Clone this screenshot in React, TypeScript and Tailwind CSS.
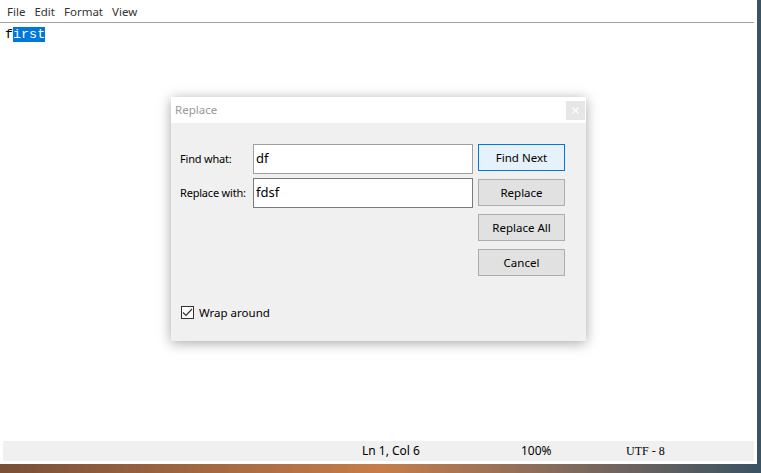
import React from 'react';

const ui = { fontFamily: '"Noto Sans", "Open Sans", sans-serif' };

function DialogButton({ label, primary }: { label: string; primary?: boolean }) {
    return (
        <div
            className={`h-[27px] w-[87px] flex items-center justify-center text-[11.5px] text-black border ${primary ? 'bg-[#e5f1fb] border-[#0078d7]' : 'bg-[#e1e1e1] border-[#adadad]'}`}
        >
            {label}
        </div>
    );
}

export default function App() {
    return (
        <div
            className="relative w-[761px] h-[473px] overflow-hidden bg-gradient-to-r from-[#7a5038] via-[#c67d4a] to-[#3a5262]"
            style={ui}
        >
            {/* Notepad window */}
            <div className="w-[757px] h-[464px] bg-white flex flex-col">
                <div className="h-[23px] w-[754px] flex items-center gap-[9px] pl-[7px] pt-[2px] text-[11.5px] text-[#333] border-b border-[#a0a0a0]">
                    <span>File</span>
                    <span>Edit</span>
                    <span>Format</span>
                    <span>View</span>
                </div>
                <div className="flex-1 pl-[5px] pt-[4px]">
                    <div
                        className="text-[13.4px] leading-[16px] text-black"
                        style={{ fontFamily: '"Liberation Mono", "DejaVu Sans Mono", monospace' }}
                    >
                        f<span className="bg-[#0078d7] text-white">irst</span>
                    </div>
                </div>
                <div className="h-[20px] ml-[3px] mr-[3px] mb-[3px] w-[751px] bg-[#f0f0f0] relative text-[12px] text-black">
                    <span className="absolute left-[359px] top-[1px]">Ln 1, Col 6</span>
                    <span className="absolute left-[518px] top-[1px]">100%</span>
                    <span
                        className="absolute left-[623px] top-[1px]"
                        style={{ fontFamily: '"Liberation Serif", serif' }}
                    >
                        UTF - 8
                    </span>
                </div>
            </div>

            {/* Replace dialog */}
            <div className="absolute left-[171px] top-[97px] w-[415px] h-[244px] bg-[#f0f0f0] shadow-[0_2px_12px_rgba(0,0,0,0.35)] flex flex-col">
                <div className="h-[26px] bg-white flex items-center justify-between pl-[4px] pr-[1px]">
                    <span className="text-[11.5px] text-[#999]">Replace</span>
                    <div className="w-[19px] h-[19px] bg-[#e6e6e6] flex items-center justify-center">
                        <svg width="7" height="7" viewBox="0 0 7 7" stroke="#fff" strokeWidth="1.2">
                            <path d="M0.5 0.5 L6.5 6.5 M6.5 0.5 L0.5 6.5" />
                        </svg>
                    </div>
                </div>
                <div className="flex-1 flex pt-[21px] pl-[9px]">
                    <div className="flex flex-col">
                        <div className="flex items-center h-[30px]">
                            <span className="w-[73px] whitespace-nowrap text-[11px] tracking-[-0.2px] text-black">Find what:</span>
                            <div className="w-[220px] h-[30px] bg-white border border-[#a0a0a0] flex items-center pl-[2px] text-[13px] text-black">
                                df
                            </div>
                        </div>
                        <div className="flex items-center h-[30px] mt-[4px]">
                            <span className="w-[73px] whitespace-nowrap text-[11px] tracking-[-0.2px] text-black">Replace with:</span>
                            <div className="w-[220px] h-[30px] bg-white border border-[#7a7a7a] flex items-center pl-[2px] text-[13px] text-black">
                                fdsf
                            </div>
                        </div>
                        <div className="flex items-center gap-[5px] mt-[96px] ml-[1px]">
                            <div className="w-[13px] h-[13px] border border-[#333] bg-white flex items-center justify-center">
                                <svg width="11" height="9" viewBox="0 0 11 9" fill="none" stroke="#333" strokeWidth="1.2">
                                    <path d="M1 4.5 L4 7.5 L10 1" />
                                </svg>
                            </div>
                            <span className="text-[11.5px] text-black">Wrap around</span>
                        </div>
                    </div>
                    <div className="flex flex-col gap-[8px] ml-[5px]">
                        <DialogButton label="Find Next" primary />
                        <DialogButton label="Replace" />
                        <DialogButton label="Replace All" />
                        <DialogButton label="Cancel" />
                    </div>
                </div>
            </div>
        </div>
    );
}
